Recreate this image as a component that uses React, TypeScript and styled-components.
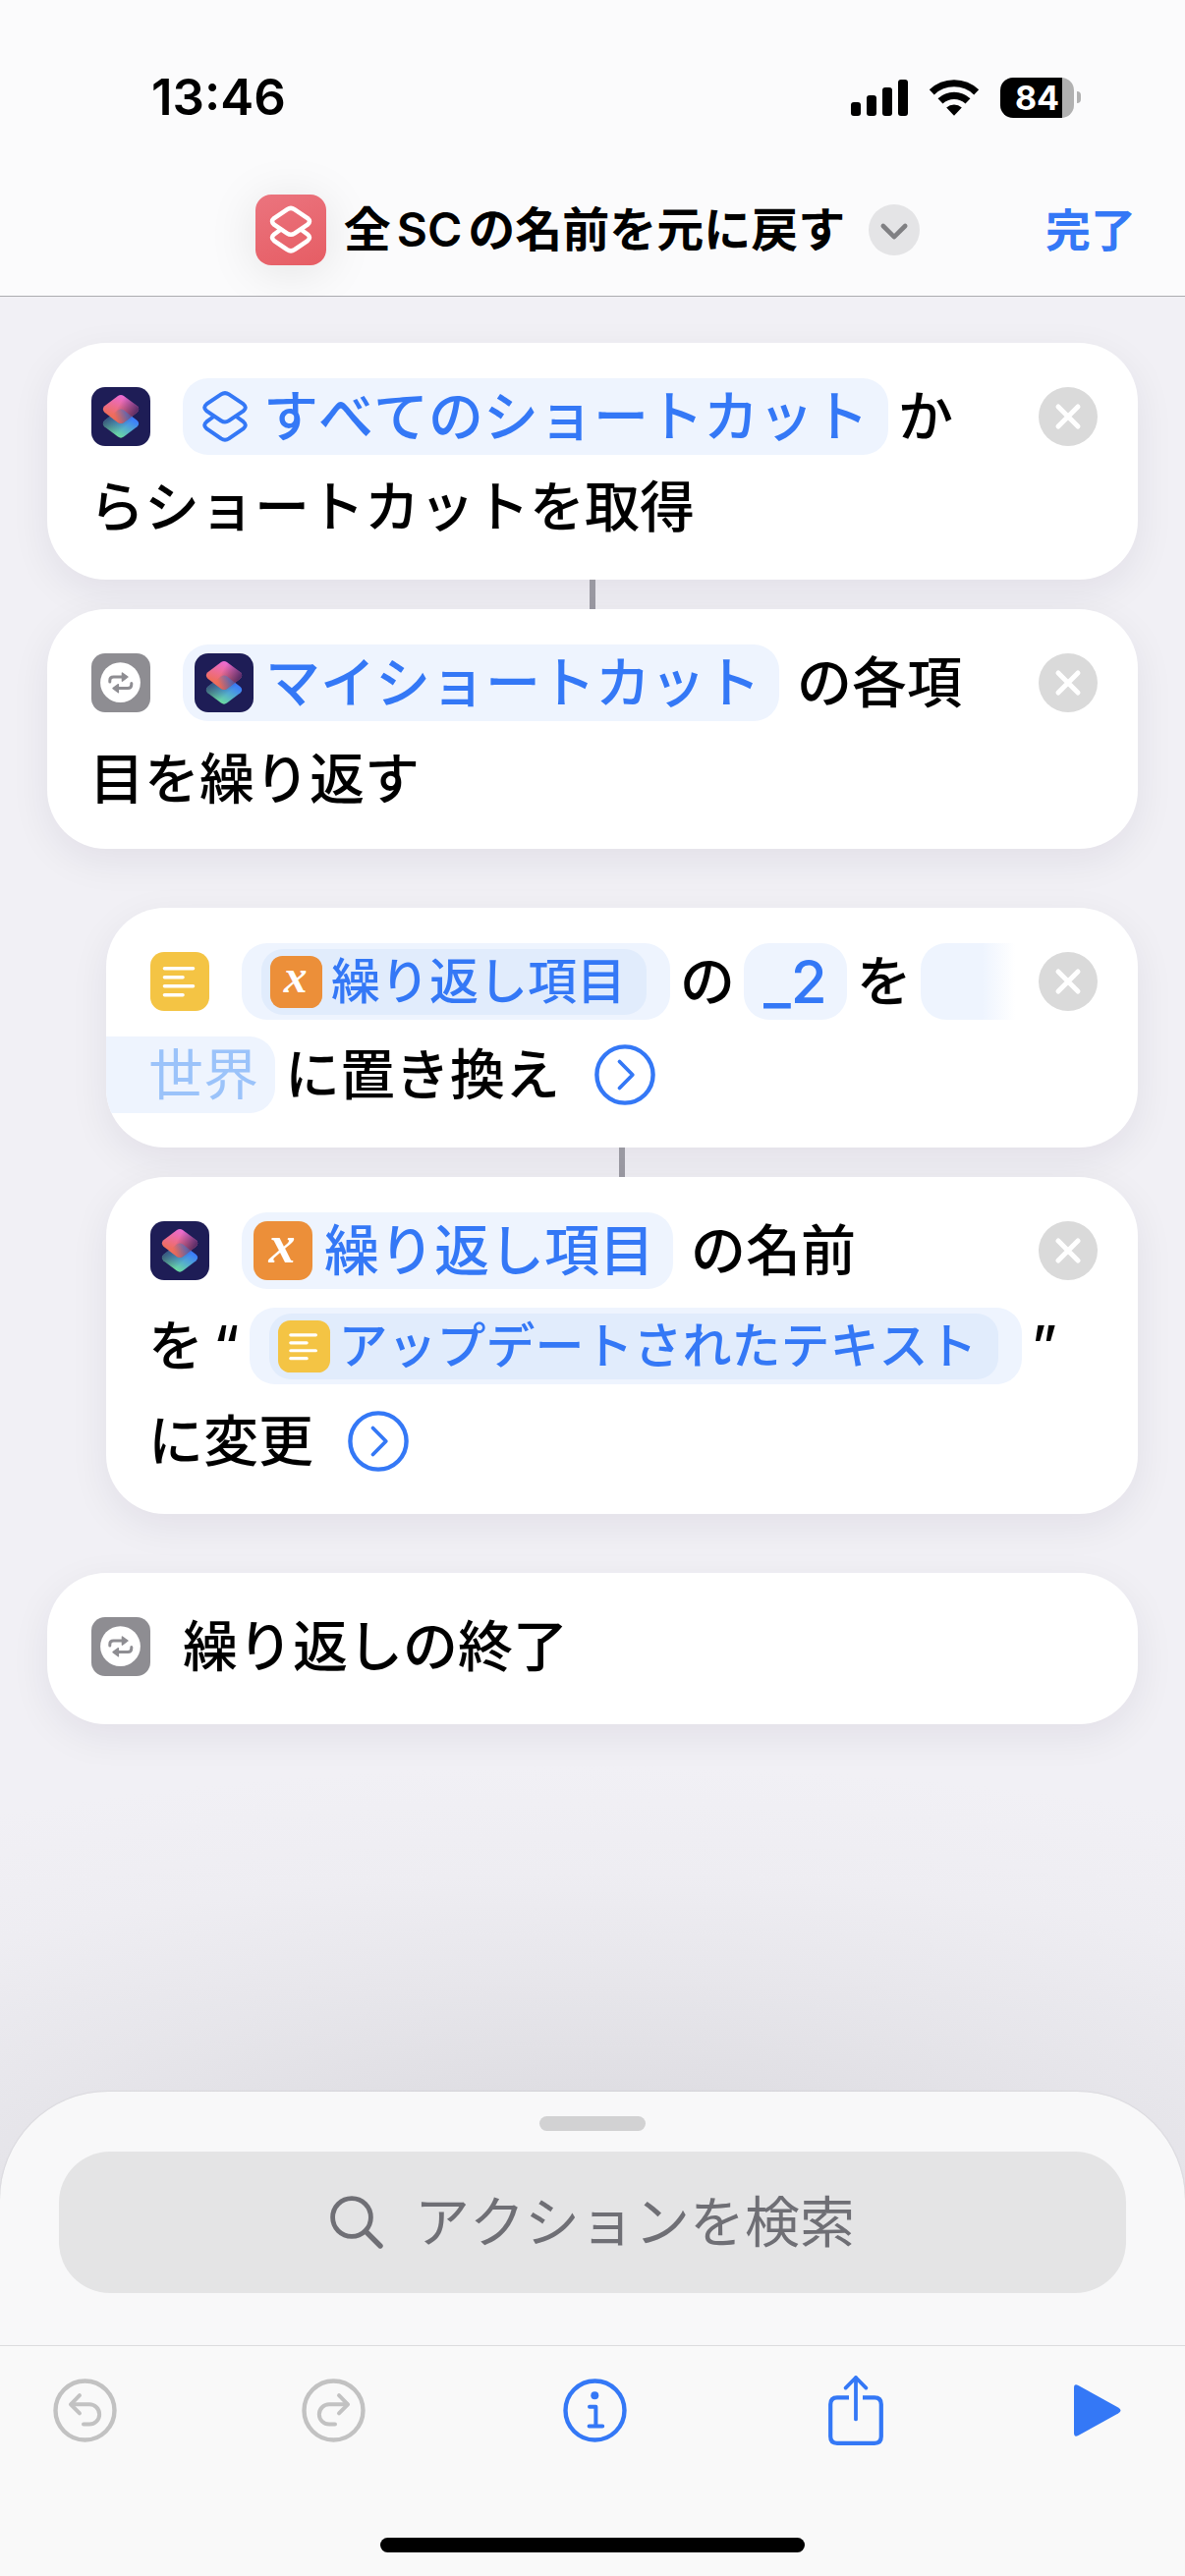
import React from 'react';
import styled, { createGlobalStyle } from 'styled-components';

const BLUE = '#3478f6';
const INK = '#000000';

const GlobalStyle = createGlobalStyle`
  *, *::before, *::after { box-sizing: border-box; }
  body {
    margin: 0;
    background: #f1f0f5;
    color: ${INK};
    font-family: Inter, "Noto Sans CJK JP", sans-serif;
    font-weight: 500;
    font-kerning: none;
    -webkit-font-smoothing: antialiased;
  }
  button, input { font: inherit; color: inherit; font-kerning: inherit; }
  button { border: 0; padding: 0; background: none; cursor: pointer; }
  svg { display: block; flex: none; overflow: visible; }
`;

const Screen = styled.div`
  min-height: 100vh;
  display: flex;
  flex-direction: column;
  overflow: hidden;
`;

/* ---------- header ---------- */

const Header = styled.header`
  background: #fbfbfc;
  border-bottom: 1px solid #acacb0;
`;

const StatusBar = styled.div`
  height: 198px;
  padding: 0 106px 0 154px;
  display: flex;
  align-items: center;
  justify-content: space-between;
`;

const Clock = styled.time`
  font-size: 51px;
  line-height: 60px;
  font-weight: 600;
`;

const StatusIcons = styled.div`
  display: flex;
  align-items: center;
  gap: 22px;
`;

const Battery = styled.div`
  display: flex;
  align-items: center;
  gap: 3px;
`;

const BatteryBody = styled.div<{ $level: number }>`
  width: 75px;
  height: 41px;
  border-radius: 13px;
  display: grid;
  place-items: center;
  background: linear-gradient(90deg, #000 ${p => p.$level}%, #b1b1b1 ${p => p.$level}%);
  color: #fff;
  font-size: 34px;
  line-height: 41px;
  font-weight: 700;
`;

const BatteryNub = styled.div`
  width: 4px;
  height: 12px;
  border-radius: 0 6px 6px 0;
  background: #b1b1b1;
`;

const NavBar = styled.div`
  height: 72px;
  margin-bottom: 31px;
  padding: 0 50px 0 40px;
  display: grid;
  grid-template-columns: 1fr auto 1fr;
  align-items: center;
`;

const TitleGroup = styled.div`
  grid-column: 2;
  display: flex;
  align-items: center;
`;

const ShortcutBadge = styled.div`
  width: 72px;
  height: 72px;
  border-radius: 16px;
  display: grid;
  place-items: center;
  color: #fff;
  background: linear-gradient(160deg, #eb747e, #e65d64);
  box-shadow: 0 6px 50px rgba(0, 0, 0, 0.1);
`;

const Title = styled.h1`
  margin: 0 24px 0 18px;
  font-size: 48px;
  line-height: 72px;
  font-weight: 600;
  white-space: nowrap;
`;

const Latin = styled.span`
  margin: 0 6px;
`;

const TitleMenu = styled.button`
  width: 52px;
  height: 52px;
  border-radius: 50%;
  background: #e4e4e6;
`;

const DoneButton = styled.button`
  justify-self: end;
  color: ${BLUE};
  font-size: 46px;
  line-height: 72px;
  font-weight: 600;
`;

/* ---------- editor ---------- */

const Workspace = styled.div`
  flex: 1;
  display: flex;
  flex-direction: column;
  background: radial-gradient(
    ellipse 110% 440px at 50% calc(100% - 150px),
    #dad9de 0%,
    #dfdee3 25%,
    #e7e6eb 50%,
    #eeedf2 75%,
    #f1f0f5 100%
  );
`;

const Editor = styled.main`
  flex: 1;
  padding: 47px 48px 60px;
  display: flex;
  flex-direction: column;
`;

const Nested = styled.div`
  margin: 60px 0;
  padding-left: 60px;
  display: flex;
  flex-direction: column;
`;

const Connector = styled.div`
  align-self: center;
  width: 6px;
  height: 30px;
  background: #9a99a2;
`;

const Card = styled.section<{ $gap?: number; $bottom?: number }>`
  padding: 36px 41px ${p => p.$bottom ?? 35}px 45px;
  display: flex;
  flex-direction: column;
  gap: ${p => p.$gap ?? 14}px;
  overflow: hidden;
  border-radius: 60px;
  background: #fff;
  box-shadow: 0 12px 40px rgba(30, 20, 60, 0.07);
`;

const Line = styled.div`
  height: 78px;
  display: flex;
  align-items: center;
  white-space: nowrap;
  font-size: 56px;
  line-height: 78px;
`;

const WrappedLine = styled(Line)`
  margin-left: -2px;
`;

const Words = styled.span<{ $before?: number }>`
  margin-left: ${p => p.$before ?? 0}px;
`;

const Token = styled.button<{ $before?: number; $pad: string; $gap?: number }>`
  height: 78px;
  margin-left: ${p => p.$before ?? 0}px;
  padding: 0 ${p => p.$pad};
  display: flex;
  align-items: center;
  gap: ${p => p.$gap ?? 0}px;
  border-radius: 26px;
  background: #eef4fe;
  color: ${BLUE};
`;

const NumberToken = styled(Token)`
  font-size: 60px;
`;

const EdgeToken = styled(Token)`
  border-radius: 0 26px 26px 0;
  color: #9bc3fa;
  font-weight: 400;
`;

const FadingToken = styled.span`
  width: 96px;
  height: 78px;
  margin-left: 9px;
  border-radius: 26px 0 0 26px;
  background: linear-gradient(90deg, #eef4fe 65%, #fff);
`;

const Variable = styled.span`
  height: 67px;
  padding: 0 21px 0 9px;
  display: flex;
  align-items: center;
  gap: 9px;
  border-radius: 22px;
  background: #e1ecfc;
  font-size: 50px;
  line-height: 67px;
`;

const RemoveButton = styled.button`
  width: 60px;
  height: 60px;
  margin-left: auto;
  border-radius: 50%;
  background: #dadada;
`;

const ExpandButton = styled.button`
  margin-left: 35px;
  color: ${BLUE};
`;

/* ---------- bottom sheet ---------- */

const Sheet = styled.section`
  padding: 25px 60px 53px;
  display: flex;
  flex-direction: column;
  align-items: center;
  gap: 21px;
  border-radius: 110px 110px 0 0;
  background: #f8f8f9;
  box-shadow: 0 0 2px rgba(0, 0, 0, 0.15);
`;

const Grabber = styled.div`
  width: 108px;
  height: 15px;
  border-radius: 8px;
  background: #d2d2d3;
`;

const SearchBox = styled.label`
  align-self: stretch;
  height: 144px;
  border-radius: 52px;
  display: flex;
  align-items: center;
  justify-content: center;
  gap: 32px;
  background: #e4e4e5;
  color: #6f6f75;
`;

const SearchInput = styled.input`
  width: 8em;
  height: 84px;
  padding: 0;
  border: 0;
  outline: 0;
  background: none;
  font-size: 56px;
  font-weight: 400;
  &::placeholder { color: #6f6f75; opacity: 1; }
`;

const Footer = styled.footer`
  border-top: 1px solid #dcdcde;
  background: #f9f9f9;
`;

const Toolbar = styled.div`
  height: 131px;
  padding: 0 63px 0 54px;
  display: flex;
  align-items: center;
  justify-content: space-between;
`;

const ToolButton = styled.button<{ $width: number }>`
  width: ${p => p.$width}px;
  display: flex;
  justify-content: center;
  color: ${BLUE};
  &:disabled { color: #c2c2c2; cursor: default; }
`;

const HomeIndicator = styled.div`
  width: 432px;
  height: 15px;
  margin: 64px auto 24px;
  border-radius: 8px;
  background: #000;
`;

/* ---------- icons ---------- */

const stroke = {
  fill: 'none',
  stroke: 'currentColor',
  strokeLinecap: 'round' as const,
  strokeLinejoin: 'round' as const,
};

const SignalIcon = () => (
  <svg width="58" height="37" viewBox="0 0 58 37">
    <rect x="0" y="23" width="10" height="14" rx="3" />
    <rect x="16" y="16" width="10" height="21" rx="3" />
    <rect x="32" y="8" width="10" height="29" rx="3" />
    <rect x="48" y="0" width="10" height="37" rx="3" />
  </svg>
);

const WifiIcon = () => (
  <svg width="50" height="37" viewBox="0 0 50 37">
    <g fill="none" stroke="#000" strokeWidth="7.2">
      <path d="M2.3 12.8A33 33 0 0 1 47.7 12.8" />
      <path d="M11 21.9A20.4 20.4 0 0 1 39 21.9" />
    </g>
    <path d="M25 36.7L17.2 28.6A11.4 11.4 0 0 1 32.8 28.6Z" />
  </svg>
);

const LayersIcon = ({ size = 46, weight = 4 }: { size?: number; weight?: number }) => (
  <svg width={size} height={(size * 52) / 46} viewBox="0 0 46 52" {...stroke} strokeWidth={weight}>
    <path d="M19 3.4Q23 .8 27 3.4L41.6 13.2Q46 16.8 41.6 20.4L27 30.2Q23 32.8 19 30.2L4.4 20.4Q0 16.8 4.4 13.2Z" />
    <path d="M11.5 26L4.4 31.2Q0 34.8 4.4 38.4L19 48.4Q23 51 27 48.4L41.6 38.4Q46 34.8 41.6 31.2L34.5 26" />
  </svg>
);

const RHOMBUS =
  'M27 9Q30 6.8 33 9L46.6 19.3Q49.8 22.5 46.6 25.7L33 36Q30 38.2 27 36L13.4 25.7Q10.2 22.5 13.4 19.3Z';

const ShortcutsAppIcon = ({ id }: { id: string }) => (
  <svg width="60" height="60" viewBox="0 0 60 60">
    <defs>
      <linearGradient id={`${id}-warm`} x1="0.2" y1="0.9" x2="0.6" y2="0">
        <stop offset="0.2" stopColor="#ef6d5c" />
        <stop offset="1" stopColor="#ea6bdc" />
      </linearGradient>
      <linearGradient id={`${id}-dusk`} x1="0.45" y1="0.35" x2="1" y2="0.6">
        <stop offset="0" stopColor="#3a1f5c" stopOpacity="0" />
        <stop offset="1" stopColor="#3a1f5c" stopOpacity="0.9" />
      </linearGradient>
      <linearGradient id={`${id}-cool`} x1="0.25" y1="1" x2="0.75" y2="0.3">
        <stop offset="0.1" stopColor="#6fe09a" />
        <stop offset="1" stopColor="#3c7ffb" />
      </linearGradient>
      <linearGradient id={`${id}-shade`} x1="0" y1="0.3" x2="0.5" y2="0.75">
        <stop offset="0" stopColor="#2c3564" stopOpacity="0.85" />
        <stop offset="1" stopColor="#2c3564" stopOpacity="0" />
      </linearGradient>
      <linearGradient id={`${id}-glow`} x1="0.4" y1="0.9" x2="0.9" y2="0.7">
        <stop offset="0" stopColor="#ef6d5c" />
        <stop offset="0.6" stopColor="#5d6fb8" />
        <stop offset="1" stopColor="#4a5fa8" stopOpacity="0.4" />
      </linearGradient>
      <clipPath id={`${id}-clip`}>
        <path d={RHOMBUS} transform="translate(0 14.6)" />
      </clipPath>
    </defs>
    <rect width="60" height="60" rx="14" fill="#1e1d56" />
    <g transform="translate(0 14.6)">
      <path d={RHOMBUS} fill={`url(#${id}-cool)`} />
      <path d={RHOMBUS} fill={`url(#${id}-shade)`} />
    </g>
    <path d={RHOMBUS} fill={`url(#${id}-warm)`} />
    <path d={RHOMBUS} fill={`url(#${id}-dusk)`} />
    <path d={RHOMBUS} fill={`url(#${id}-glow)`} opacity="0.75" clipPath={`url(#${id}-clip)`} />
  </svg>
);

const RepeatIcon = () => (
  <svg width="60" height="60" viewBox="0 0 60 60">
    <rect width="60" height="60" rx="14" fill="#8e8d92" />
    <circle cx="29.5" cy="29.7" r="20.4" fill="#fff" />
    <g fill="none" stroke="#8e8d92" strokeWidth="3" strokeLinecap="round">
      <path d="M18.8 29V27.6Q18.8 24 22.6 24H32" />
      <path d="M40.8 30.4V31.8Q40.8 35.6 37 35.6H27" />
    </g>
    <g fill="#8e8d92" stroke="#8e8d92" strokeWidth="1.4" strokeLinejoin="round">
      <path d="M31.4 20L37 24L31.4 28.2Z" />
      <path d="M27.4 31.6L22 35.6L27.4 39.8Z" />
    </g>
  </svg>
);

const TextIcon = ({ size = 60 }: { size?: number }) => (
  <svg width={size} height={size} viewBox="0 0 60 60">
    <rect width="60" height="60" rx="14" fill="#f4c444" />
    <g stroke="#fff" strokeWidth="3.6" strokeLinecap="round">
      <path d="M14.5 16.8H43.5" />
      <path d="M14.5 25.8H33" />
      <path d="M14.5 34.8H43.5" />
      <path d="M14.5 43.8H33" />
    </g>
  </svg>
);

const VariableIcon = ({ size = 60 }: { size?: number }) => (
  <svg width={size} height={size} viewBox="0 0 60 60">
    <rect width="60" height="60" rx="14" fill="#ec8f39" />
    <text
      x="29"
      y="42"
      textAnchor="middle"
      fill="#fff"
      fontFamily="'Liberation Serif', serif"
      fontStyle="italic"
      fontWeight="700"
      fontSize="54"
    >
      x
    </text>
  </svg>
);

const Remove = () => (
  <RemoveButton aria-label="削除">
    <svg width="60" height="60" viewBox="0 0 60 60">
      <path d="M20 20L40 40M40 20L20 40" stroke="#fff" strokeWidth="5" strokeLinecap="round" />
    </svg>
  </RemoveButton>
);

const Expand = () => (
  <ExpandButton aria-label="詳細を表示">
    <svg width="62" height="62" viewBox="0 0 62 62" {...stroke} strokeWidth="4.4">
      <circle cx="31" cy="31" r="28.6" />
      <path d="M25.5 17.5L38.8 31L25.5 44.5" strokeWidth="3.8" />
    </svg>
  </ExpandButton>
);

const TurnIcon = ({ flip }: { flip?: boolean }) => (
  <svg width="65" height="65" viewBox="0 0 65 65" {...stroke} strokeWidth="4.4">
    <circle cx="32.5" cy="32.5" r="30" />
    <g transform={flip ? 'translate(65 0) scale(-1 1)' : undefined} strokeWidth="4">
      <path d="M27 17.2L18 26.3L27 35.4" />
      <path d="M18.5 26.3H37A10 10 0 0 1 37 46.6H31" />
    </g>
  </svg>
);

const InfoIcon = () => (
  <svg width="65" height="65" viewBox="0 0 65 65" {...stroke} strokeWidth="4.4">
    <circle cx="32.5" cy="32.5" r="30" />
    <circle cx="32.3" cy="17.3" r="4" fill="currentColor" stroke="none" />
    <path d="M27 28.8H33.4V48.4M26.6 48.4H40.2" strokeWidth="4" />
  </svg>
);

const ShareIcon = () => (
  <svg width="56" height="73" viewBox="0 -1 56 73" {...stroke} strokeWidth="4.2">
    <path d="M21 22.4H9Q2.2 22.4 2.2 29.2V62Q2.2 68.8 9 68.8H47Q53.8 68.8 53.8 62V29.2Q53.8 22.4 47 22.4H35" strokeLinecap="butt" />
    <path d="M28 2.2V44.4" strokeWidth="3.8" />
    <path d="M17.6 12.6L28 2L38.4 12.6" strokeWidth="3.8" />
  </svg>
);

const PlayIcon = () => (
  <svg width="48" height="53" viewBox="0 0 48 53">
    <path d="M0 3.4Q0-1.2 4.4 1L45 23.6Q50 26.6 45 29.6L4.4 52Q0 54.2 0 49.6Z" fill="currentColor" />
  </svg>
);

const SearchIcon = () => (
  <svg width="54" height="54" viewBox="0 0 54 54" {...stroke} strokeWidth="4.8">
    <circle cx="22" cy="22" r="19.4" />
    <path d="M36 36L51 51" strokeWidth="5.4" />
  </svg>
);

/* ---------- page ---------- */

export default function App() {
  return (
    <Screen lang="ja">
      <GlobalStyle />
      <Header>
        <StatusBar>
          <Clock>13:46</Clock>
          <StatusIcons>
            <SignalIcon />
            <WifiIcon />
            <Battery>
              <BatteryBody $level={84}>84</BatteryBody>
              <BatteryNub />
            </Battery>
          </StatusIcons>
        </StatusBar>
        <NavBar>
          <TitleGroup>
            <ShortcutBadge>
              <LayersIcon size={42} weight={5} />
            </ShortcutBadge>
            <Title>全<Latin>SC</Latin>の名前を元に戻す</Title>
            <TitleMenu aria-label="メニュー">
              <svg width="52" height="52" viewBox="0 0 52 52" {...stroke} color="#808083" strokeWidth="4.6">
                <path d="M14.8 22L26 33.2L37.2 22" />
              </svg>
            </TitleMenu>
          </TitleGroup>
          <DoneButton>完了</DoneButton>
        </NavBar>
      </Header>

      <Workspace>
        <Editor>
          <Card>
            <Line>
              <ShortcutsAppIcon id="get" />
              <Token $before={33} $pad="20px" $gap={16}>
                <LayersIcon />
                すべてのショートカット
              </Token>
              <Words $before={10}>か</Words>
              <Remove />
            </Line>
            <WrappedLine>らショートカットを取得</WrappedLine>
          </Card>
          <Connector />
          <Card $gap={20} $bottom={32}>
            <Line>
              <RepeatIcon />
              <Token $before={33} $pad="19px 0 12px" $gap={12}>
                <ShortcutsAppIcon id="mine" />
                マイショートカット
              </Token>
              <Words $before={18}>の各項</Words>
              <Remove />
            </Line>
            <WrappedLine>目を繰り返す</WrappedLine>
          </Card>

          <Nested>
            <Card $gap={17}>
              <Line>
                <TextIcon />
                <Token $before={33} $pad="24px 0 20px">
                  <Variable>
                    <VariableIcon size={53} />
                    繰り返し項目
                  </Variable>
                </Token>
                <Words $before={10}>の</Words>
                <NumberToken $before={9} $pad="20px">_2</NumberToken>
                <Words $before={10}>を</Words>
                <FadingToken />
                <Remove />
              </Line>
              <WrappedLine>
                <EdgeToken $before={-43} $pad="17px 0 43px">世界</EdgeToken>
                <Words $before={10}>に置き換え</Words>
                <Expand />
              </WrappedLine>
            </Card>
            <Connector />
            <Card $gap={19}>
              <Line>
                <ShortcutsAppIcon id="rename" />
                <Token $before={33} $pad="19px 0 12px" $gap={12}>
                  <VariableIcon />
                  繰り返し項目
                </Token>
                <Words $before={18}>の名前</Words>
                <Remove />
              </Line>
              <WrappedLine>
                <Words>を</Words>
                <Words $before={10}>“</Words>
                <Token $before={10} $pad="24px 0 20px">
                  <Variable>
                    <TextIcon size={53} />
                    アップデートされたテキスト
                  </Variable>
                </Token>
                <Words $before={10}>”</Words>
              </WrappedLine>
              <WrappedLine>
                <Words>に変更</Words>
                <Expand />
              </WrappedLine>
            </Card>
          </Nested>

          <Card $bottom={40}>
            <Line>
              <RepeatIcon />
              <Words $before={33}>繰り返しの終了</Words>
            </Line>
          </Card>
        </Editor>

        <Sheet>
          <Grabber />
          <SearchBox>
            <SearchIcon />
            <SearchInput type="text" placeholder="アクションを検索" aria-label="アクションを検索" />
          </SearchBox>
        </Sheet>
      </Workspace>
      <Footer>
        <Toolbar>
          <ToolButton $width={65} disabled aria-label="取り消す"><TurnIcon /></ToolButton>
          <ToolButton $width={65} disabled aria-label="やり直す"><TurnIcon flip /></ToolButton>
          <ToolButton $width={91} aria-label="情報"><InfoIcon /></ToolButton>
          <ToolButton $width={64} aria-label="共有"><ShareIcon /></ToolButton>
          <ToolButton $width={52} aria-label="実行"><PlayIcon /></ToolButton>
        </Toolbar>
        <HomeIndicator />
      </Footer>
    </Screen>
  );
}
